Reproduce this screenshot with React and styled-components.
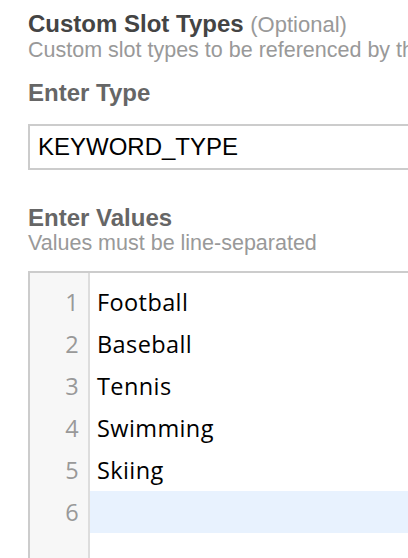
import React from "react";
import styled, { createGlobalStyle } from "styled-components";

const GlobalStyle = createGlobalStyle`
  html, body {
    margin: 0;
    padding: 0;
    background: #fff;
    overflow: hidden;
  }
  body {
    font-family: "Liberation Sans", Arial, sans-serif;
  }
`;

const Page = styled.div`
  width: 408px;
  height: 558px;
  padding: 11px 0 0 28px;
  box-sizing: border-box;
  overflow: hidden;
`;

const Section = styled.section`
  display: flex;
  flex-direction: column;
  width: 560px;
`;

const Title = styled.h2`
  margin: 0;
  font-size: 24px;
  line-height: 26px;
  font-weight: bold;
  color: #444;
  white-space: nowrap;
`;

const Optional = styled.span`
  font-size: 22px;
  font-weight: normal;
  color: #999;
`;

const Hint = styled.div`
  font-size: 21.5px;
  line-height: 24px;
  color: #999;
  white-space: nowrap;
`;

const Label = styled.h3`
  margin: ${(p) => p.$top}px 0 0;
  font-size: 24px;
  line-height: 26px;
  font-weight: bold;
  color: #666;
`;

const TypeInput = styled.input`
  margin-top: 18px;
  height: 46px;
  box-sizing: border-box;
  border: 2px solid #ccc;
  padding: 0 8px;
  font-family: "Liberation Sans", Arial, sans-serif;
  font-size: 24px;
  color: #000;
  outline: none;
`;

const Editor = styled.div`
  margin-top: 16px;
  display: flex;
  border-top: 2px solid #ccc;
  border-left: 2px solid #ccc;
  height: 300px;
  font-family: "Open Sans", "Noto Sans", sans-serif;
  font-size: 23.5px;
  letter-spacing: 0.4px;
`;

const Gutter = styled.div`
  width: 58px;
  flex: none;
  background: #f7f7f7;
  border-right: 2px solid #ddd;
  padding-top: 8px;
`;

const LineNo = styled.div`
  height: 42px;
  line-height: 42px;
  text-align: right;
  padding-right: 9px;
  color: #999;
`;

const Lines = styled.div`
  flex: 1;
  padding-top: 8px;
`;

const Line = styled.div`
  height: 42px;
  line-height: 42px;
  padding-left: 7px;
  color: #000;
  background: ${(p) => (p.$active ? "#e8f2fe" : "transparent")};
`;

const values = ["Football", "Baseball", "Tennis", "Swimming", "Skiing", ""];

export default function App() {
  return (
    <Page>
      <GlobalStyle />
      <Section>
        <Title>
          Custom Slot Types <Optional>(Optional)</Optional>
        </Title>
        <Hint>Custom slot types to be referenced by the intent schema</Hint>
        <Label $top={18}>Enter Type</Label>
        <TypeInput defaultValue="KEYWORD_TYPE" />
        <Label $top={35}>Enter Values</Label>
        <Hint>Values must be line-separated</Hint>
        <Editor>
          <Gutter>
            {values.map((_, i) => (
              <LineNo key={i}>{i + 1}</LineNo>
            ))}
          </Gutter>
          <Lines>
            {values.map((v, i) => (
              <Line key={i} $active={i === values.length - 1}>
                {v}
              </Line>
            ))}
          </Lines>
        </Editor>
      </Section>
    </Page>
  );
}
